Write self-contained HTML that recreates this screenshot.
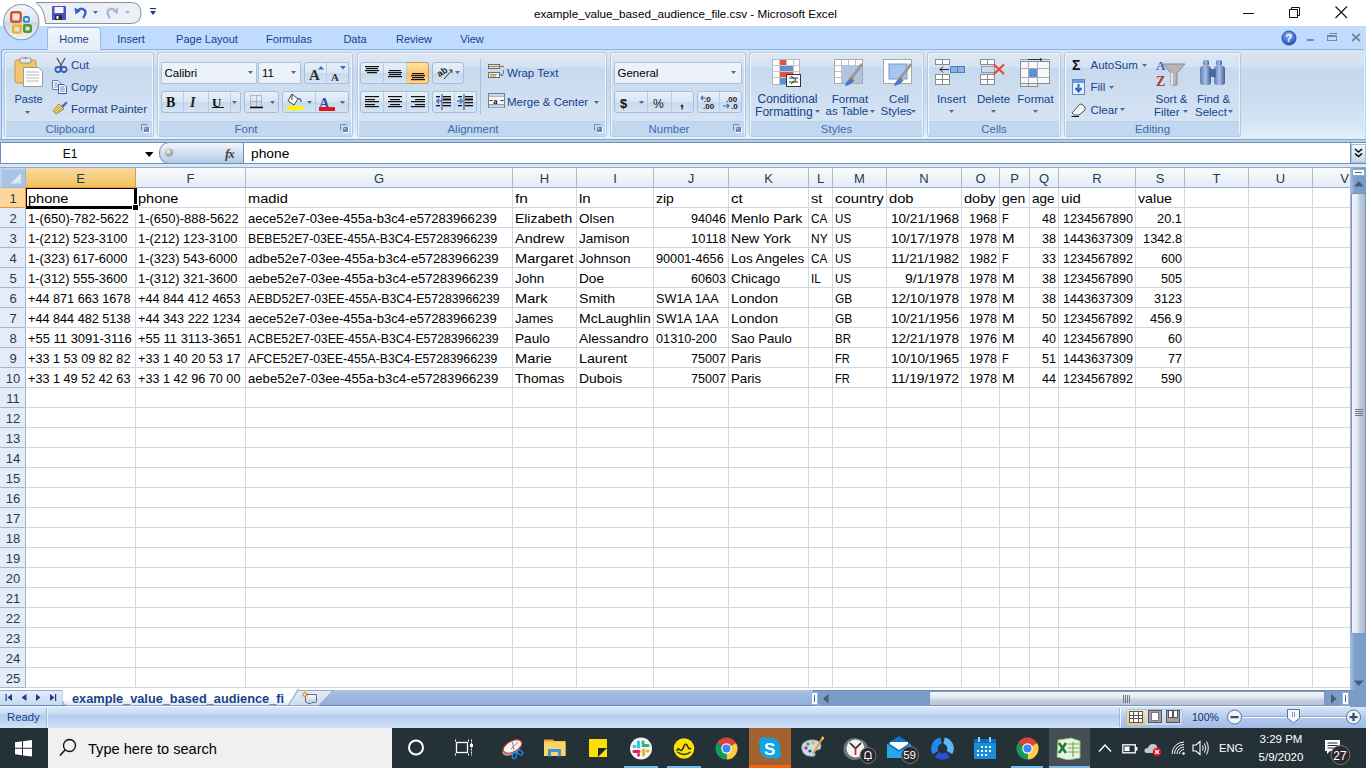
<!DOCTYPE html>
<html><head><meta charset="utf-8"><style>
*{box-sizing:border-box;margin:0;padding:0}
html,body{width:1366px;height:768px;overflow:hidden;background:#fff;font-family:"Liberation Sans",sans-serif;position:relative}
.a{position:absolute}
/* title bar */
#title{left:0;top:0;width:1366px;height:26px;background:#fff}
#ttext{left:0;top:6px;width:1366px;text-align:center;font-size:12.5px;color:#000;letter-spacing:0}
/* ribbon */
#tabs{left:0;top:26px;width:1366px;height:114px;background:#BFDBFF}
#rpanel{left:1px;top:49px;width:1364px;height:90px;border:1px solid #8DB2E3;border-right-color:#CFF3FF;border-bottom-color:#C9F6FF;border-radius:3px 3px 0 0;background:linear-gradient(#DAE5F3 0,#D3E0F1 17px,#C6D8EE 18px,#C9DBEF 45px,#D6E6F5 75px,#E4F2FD 89px)}
.tab{position:absolute;top:30px;height:20px;font-size:12px;color:#15428B;text-align:center}
.tab.on{background:linear-gradient(#F5F9FE,#E1EBF8);border:1px solid #8DB2E3;border-bottom:none;border-radius:3px 3px 0 0;height:21px;top:27px;padding-top:3px}
.grp{position:absolute;top:52px;height:85px;border:1px solid #B6C8DD;border-radius:3px;box-shadow:inset 1px 1px 0 #F0F5FB,inset -1px 0 0 #EEF3FA;background:linear-gradient(#DEE8F5 0,#D4E2F2 14px,#C7D9EE 15px,#D5E4F4 68px)}
.glab{position:absolute;left:1px;right:1px;bottom:0;height:15px;background:#C2D8F0;border-top:1px solid #BDD2EA;text-align:center;font-size:11px;color:#3E6AAA;line-height:15px}
/* formula bar */
#fbar{left:0;top:140px;width:1366px;height:28px;background:#D5E3F4}
/* grid */
#grid{left:0;top:168px;width:1366px;height:520px;background:#fff}
.colhdr{position:absolute;background:linear-gradient(#F8FAFD,#E4EBF6);border-bottom:1px solid #95AECB}
.corner{position:absolute;left:0;top:168px;width:26px;height:20px;background:#A9C4E9;border:1px solid #C4D6EE;border-right:1px solid #9EB6CE;border-bottom:1px solid #9EB6CE;box-shadow:inset 1px 1px 0 #B9CFEC}
.hlh{position:absolute;left:0;width:25px;height:1px}
.ch{position:absolute;top:168px;height:19px;text-align:center;font-size:13px;line-height:21px;color:#1F3B53;background:linear-gradient(#F9FBFD,#E4EBF6)}
.ch.sel{background:linear-gradient(#F9D99F,#F1C15F);border-bottom:1px solid #F29436;height:20px}
.rh{position:absolute;left:0;width:26px;height:19px;background:#E4ECF7;text-align:center;font-size:13px;line-height:22px;padding-left:1px;color:#1F3B53;border-right:1px solid #9EB6CE}
.rh.sel{background:#FCD79C;border-right:1px solid #F29436}
.vl{position:absolute;top:188px;width:1px;height:500px;background:#D0D7E5}
.hl{position:absolute;left:25px;width:1325px;height:1px;background:#D0D7E5}
.c{position:absolute;height:19px;font-size:13px;line-height:20px;color:#000;white-space:nowrap}
.c.r{text-align:right}
.selbox{position:absolute;left:25px;top:187px;width:112px;height:22px;border:2px solid #000}
.fillh{position:absolute;left:133px;top:205px;width:5px;height:5px;background:#000;border:1px solid #fff}
/* bottom */
#tabsbar{left:0;top:688px;width:1366px;height:19px;background:#BFD3EC}
#status{left:0;top:707px;width:1366px;height:21px;background:linear-gradient(#D7E5F6,#C0D6F0)}
#taskbar{left:0;top:728px;width:1366px;height:40px;background:#1F2B33}
.t{position:absolute;line-height:1;white-space:nowrap}
.combo{background:linear-gradient(#EEF3FA,#E9F0F9);border:1px solid #ABC1DE;border-radius:1px}
.btng{background:linear-gradient(#E8EFF9 0,#DAE6F4 48%,#C8DAEE 52%,#D5E3F3 100%);border:1px solid #A6BEDD;border-radius:3px}

</style></head><body>
<div class="a" id="title"></div>
<div class="a" id="tabs"></div>
<div class="a" id="rpanel"></div>
<div class="t" style="top:8.10px;font-size:11.7px;color:#000;left:534px;width:300px;text-align:center;">example_value_based_audience_file.csv - Microsoft Excel</div>
<div class="a " style="left:1243px;top:13px;width:11px;height:1px;background:#111"></div>
<svg class="a" style="left:1289px;top:7px" width="12" height="12"><path d="M0.5 2.5H8.5V10.5H0.5Z M2.5 2.5V0.5H10.5V8.5H8.5" fill="none" stroke="#111"/></svg>
<svg class="a" style="left:1335px;top:6px" width="13" height="13"><path d="M0.5 0.5L12 12M12 0.5L0.5 12" stroke="#111" stroke-width="1.1"/></svg>
<svg class="a" style="left:2px;top:3px" width="40" height="40"><defs><linearGradient id="ob" x1="0" y1="0" x2="0" y2="1"><stop offset="0" stop-color="#F6F8FB"/><stop offset="0.48" stop-color="#DDE3EC"/><stop offset="0.52" stop-color="#C9D3E1"/><stop offset="1" stop-color="#F2F5F9"/></linearGradient></defs>
<circle cx="19.3" cy="19.1" r="17.6" fill="url(#ob)" stroke="#8D9AAE" stroke-width="1.1"/>
<rect x="9.2" y="9.2" width="9.5" height="9.5" rx="2" fill="none" stroke="#E0501A" stroke-width="2.4"/>
<rect x="21.8" y="14" width="5.2" height="4.8" rx="1.2" fill="none" stroke="#2F87D8" stroke-width="1.8"/>
<rect x="11.2" y="22.6" width="7.4" height="7" rx="1.5" fill="none" stroke="#F4B01C" stroke-width="2.4"/>
<rect x="22.2" y="22.2" width="6.6" height="6.5" rx="1.5" fill="none" stroke="#4A9A2C" stroke-width="2.4"/>
<circle cx="18.5" cy="18.1" r="1.1" fill="#E8621E"/><circle cx="22.4" cy="18.1" r="1.1" fill="#2F87D8"/><circle cx="18.5" cy="22.4" r="1.1" fill="#F4B01C"/><circle cx="22.4" cy="22.4" r="1.1" fill="#4A9A2C"/>
</svg>
<svg class="a" style="left:35px;top:1px" width="110" height="24"><path d="M1 1.5H96Q106 1.5 106 12Q106 22.5 96 22.5H10.5Q10 8 1 1.5Z" fill="#EBF0F7" stroke="#8E8E98" stroke-width="1"/></svg>
<svg class="a" style="left:52px;top:6px" width="14" height="14"><rect x="0" y="0" width="14" height="14" rx="1" fill="#4C4FC2"/><rect x="2.5" y="1" width="9" height="6" fill="#F4F4FA"/><rect x="3" y="9" width="7" height="5" fill="#2A2A3A"/><rect x="4.5" y="10" width="2" height="3" fill="#fff"/></svg>
<svg class="a" style="left:74px;top:6px" width="14" height="14"><path d="M3 5Q7 1 10.5 4Q13 7 9 12" stroke="#3565C8" stroke-width="2.4" fill="none"/><path d="M0.5 1.5L1.5 8.5L6.5 5Z" fill="#3565C8"/></svg>
<svg class="a" style="left:93.0px;top:11.0px" width="5" height="3"><path d="M0 0H5L2.5 3Z" fill="#3B6EB2"/></svg>
<svg class="a" style="left:105px;top:6px" width="14" height="14"><path d="M11 5Q7 1 3.5 4Q1 7 5 12" stroke="#A9BBD4" stroke-width="2.4" fill="none"/><path d="M13.5 1.5L12.5 8.5L7.5 5Z" fill="#A9BBD4"/></svg>
<svg class="a" style="left:125.0px;top:11.0px" width="5" height="3"><path d="M0 0H5L2.5 3Z" fill="#A9B4C4"/></svg>
<svg class="a" style="left:150px;top:8px" width="6" height="8"><rect x="0" y="0" width="6" height="1.2" fill="#1E3E78"/><path d="M0 3H6L3 7Z" fill="#1E3E78"/></svg>
<div class="a" style="left:47px;top:27px;width:54px;height:23px;background:linear-gradient(#F2F6FC,#E3ECF8);border:1px solid #9AB9E2;border-bottom:none;border-radius:3px 3px 0 0"></div>
<div class="t" style="top:33.69px;font-size:11px;color:#15428B;left:-76px;width:300px;text-align:center;">Home</div>
<div class="t" style="top:33.69px;font-size:11px;color:#15428B;left:-19px;width:300px;text-align:center;">Insert</div>
<div class="t" style="top:33.69px;font-size:11px;color:#15428B;left:57px;width:300px;text-align:center;">Page Layout</div>
<div class="t" style="top:33.69px;font-size:11px;color:#15428B;left:139px;width:300px;text-align:center;">Formulas</div>
<div class="t" style="top:33.69px;font-size:11px;color:#15428B;left:205px;width:300px;text-align:center;">Data</div>
<div class="t" style="top:33.69px;font-size:11px;color:#15428B;left:264px;width:300px;text-align:center;">Review</div>
<div class="t" style="top:33.69px;font-size:11px;color:#15428B;left:322px;width:300px;text-align:center;">View</div>
<svg class="a" style="left:1281px;top:30px" width="16" height="16"><defs><radialGradient id="hg" cx="0.45" cy="0.3" r="0.7"><stop offset="0" stop-color="#8DB4F5"/><stop offset="1" stop-color="#1F4FC0"/></radialGradient></defs><circle cx="8" cy="8" r="7" fill="url(#hg)" stroke="#2A4C9C"/><text x="4.6" y="12.2" font-size="11" font-weight="bold" font-family="Liberation Sans" fill="#fff">?</text></svg>
<div class="a " style="left:1307px;top:39px;width:7px;height:2px;background:#7C8797"></div>
<svg class="a" style="left:1327px;top:33px" width="11" height="8"><rect x="0.5" y="2.5" width="9" height="5" fill="none" stroke="#7C8797"/><rect x="0.5" y="2.5" width="9" height="1.5" fill="#7C8797"/><path d="M2.5 0.5H10.5" stroke="#7C8797"/></svg>
<svg class="a" style="left:1351px;top:33px" width="10" height="9"><path d="M1 1L9 8M9 1L1 8" stroke="#7C8797" stroke-width="1.8"/></svg>
<div class="grp" style="left:4px;width:150px"><div class="glab"></div></div>
<div class="t" style="top:123.77px;font-size:11.5px;color:#3E6AAA;left:-80.0px;width:300px;text-align:center;">Clipboard</div>
<svg class="a" style="left:141px;top:124px" width="10" height="10"><path d="M0.5 6.5V0.5H6.5" stroke="#6A8CB8" fill="none"/><path d="M8.5 3V8.5H3" stroke="#fff" fill="none"/><rect x="3" y="3" width="5" height="5" fill="#6388B8"/><path d="M3.5 3.5L5.5 5.5" stroke="#DDE8F6" stroke-width="1"/></svg>
<div class="grp" style="left:157px;width:196px"><div class="glab"></div></div>
<div class="t" style="top:123.77px;font-size:11.5px;color:#3E6AAA;left:96.0px;width:300px;text-align:center;">Font</div>
<svg class="a" style="left:340px;top:124px" width="10" height="10"><path d="M0.5 6.5V0.5H6.5" stroke="#6A8CB8" fill="none"/><path d="M8.5 3V8.5H3" stroke="#fff" fill="none"/><rect x="3" y="3" width="5" height="5" fill="#6388B8"/><path d="M3.5 3.5L5.5 5.5" stroke="#DDE8F6" stroke-width="1"/></svg>
<div class="grp" style="left:357px;width:250px"><div class="glab"></div></div>
<div class="t" style="top:123.77px;font-size:11.5px;color:#3E6AAA;left:323.0px;width:300px;text-align:center;">Alignment</div>
<svg class="a" style="left:594px;top:124px" width="10" height="10"><path d="M0.5 6.5V0.5H6.5" stroke="#6A8CB8" fill="none"/><path d="M8.5 3V8.5H3" stroke="#fff" fill="none"/><rect x="3" y="3" width="5" height="5" fill="#6388B8"/><path d="M3.5 3.5L5.5 5.5" stroke="#DDE8F6" stroke-width="1"/></svg>
<div class="grp" style="left:610px;width:136px"><div class="glab"></div></div>
<div class="t" style="top:123.77px;font-size:11.5px;color:#3E6AAA;left:519.0px;width:300px;text-align:center;">Number</div>
<svg class="a" style="left:733px;top:124px" width="10" height="10"><path d="M0.5 6.5V0.5H6.5" stroke="#6A8CB8" fill="none"/><path d="M8.5 3V8.5H3" stroke="#fff" fill="none"/><rect x="3" y="3" width="5" height="5" fill="#6388B8"/><path d="M3.5 3.5L5.5 5.5" stroke="#DDE8F6" stroke-width="1"/></svg>
<div class="grp" style="left:749px;width:175px"><div class="glab"></div></div>
<div class="t" style="top:123.77px;font-size:11.5px;color:#3E6AAA;left:686.5px;width:300px;text-align:center;">Styles</div>
<div class="grp" style="left:927px;width:134px"><div class="glab"></div></div>
<div class="t" style="top:123.77px;font-size:11.5px;color:#3E6AAA;left:844.0px;width:300px;text-align:center;">Cells</div>
<div class="grp" style="left:1064px;width:177px"><div class="glab"></div></div>
<div class="t" style="top:123.77px;font-size:11.5px;color:#3E6AAA;left:1002.5px;width:300px;text-align:center;">Editing</div>
<div class="t" style="top:94.19px;font-size:11px;color:#15428B;left:14.5px;">Paste</div>
<svg class="a" style="left:25.0px;top:110.5px" width="5" height="3"><path d="M0 0H5L2.5 3Z" fill="#4C6C9C"/></svg>
<div class="t" style="top:60.07px;font-size:11.5px;color:#15428B;left:71px;">Cut</div>
<div class="t" style="top:82.07px;font-size:11.5px;color:#15428B;left:71px;">Copy</div>
<div class="t" style="top:103.57px;font-size:11.5px;color:#15428B;left:71px;">Format Painter</div>
<div class="a combo" style="left:161px;top:62px;width:96px;height:22px;"></div>
<div class="a combo" style="left:258px;top:62px;width:43px;height:22px;"></div>
<div class="t" style="top:68.27px;font-size:11.5px;color:#000;left:164.5px;">Calibri</div>
<div class="t" style="top:68.27px;font-size:11.5px;color:#000;left:262px;">11</div>
<svg class="a" style="left:248.0px;top:71.0px" width="5" height="3"><path d="M0 0H5L2.5 3Z" fill="#4C6C9C"/></svg>
<svg class="a" style="left:291.0px;top:71.0px" width="5" height="3"><path d="M0 0H5L2.5 3Z" fill="#4C6C9C"/></svg>
<div class="a btng" style="left:304px;top:62px;width:45px;height:22px;"></div>
<div class="a " style="left:326px;top:63px;width:1px;height:20px;background:#B9CDE6"></div>
<div class="a btng" style="left:161px;top:91px;width:80px;height:22px;"></div>
<div class="a btng" style="left:244px;top:91px;width:35px;height:22px;"></div>
<div class="a btng" style="left:282px;top:91px;width:67px;height:22px;"></div>
<div class="a " style="left:183px;top:92px;width:1px;height:20px;background:#B9CDE6"></div>
<div class="a " style="left:208px;top:92px;width:1px;height:20px;background:#B9CDE6"></div>
<div class="a " style="left:230px;top:92px;width:1px;height:20px;background:#B9CDE6"></div>
<div class="a " style="left:315px;top:92px;width:1px;height:20px;background:#B9CDE6"></div>
<div class="t" style="top:96.15px;font-size:14px;color:#111;font-weight:bold;left:166px;font-family:'Liberation Serif',serif;">B</div>
<div class="t" style="top:96.15px;font-size:14px;color:#222;font-weight:bold;left:190px;font-family:'Liberation Serif',serif;font-style:italic;">I</div>
<div class="t" style="top:96.00px;font-size:13px;color:#111;font-weight:bold;left:212px;font-family:'Liberation Serif',serif;">U</div>
<div class="a " style="left:212px;top:107px;width:12px;height:1px;background:#111"></div>
<svg class="a" style="left:232.0px;top:100.5px" width="5" height="3"><path d="M0 0H5L2.5 3Z" fill="#4C6C9C"/></svg>
<svg class="a" style="left:270.0px;top:100.5px" width="5" height="3"><path d="M0 0H5L2.5 3Z" fill="#4C6C9C"/></svg>
<svg class="a" style="left:307.0px;top:100.5px" width="5" height="3"><path d="M0 0H5L2.5 3Z" fill="#4C6C9C"/></svg>
<svg class="a" style="left:340.0px;top:100.5px" width="5" height="3"><path d="M0 0H5L2.5 3Z" fill="#4C6C9C"/></svg>
<div class="t" style="top:68.30px;font-size:15px;color:#333;font-weight:bold;left:309px;font-family:'Liberation Serif',serif;">A</div>
<div class="t" style="top:71.69px;font-size:11px;color:#333;font-weight:bold;left:331px;font-family:'Liberation Serif',serif;">A</div>
<svg class="a" style="left:318px;top:66px" width="6" height="4"><path d="M0 3.5L3 0L6 3.5Z" fill="#3B6EB2"/></svg>
<svg class="a" style="left:340px;top:66px" width="6" height="4"><path d="M0 0L3 3.5L6 0Z" fill="#3B6EB2"/></svg>
<svg class="a" style="left:249px;top:94px" width="15" height="15"><g stroke="#8A8A8A" stroke-width="1" stroke-dasharray="1 1" fill="none"><rect x="1.5" y="1.5" width="11" height="11"/><path d="M7.5 1.5V12.5M1.5 7.5H12.5"/></g><path d="M1 13.5H14" stroke="#111" stroke-width="1.5"/></svg>
<svg class="a" style="left:286px;top:93px" width="18" height="17"><path d="M6 1L2 8L8 12L12 6Z" fill="#fff" stroke="#444" stroke-width="1"/><path d="M12 6Q15 5 15 9" stroke="#3B6EB2" stroke-width="1.5" fill="none"/><path d="M6 1V7" stroke="#444"/><rect x="1" y="13" width="16" height="4" fill="#FFF200"/></svg>
<div class="t" style="top:95.73px;font-size:14.5px;color:#2D4E9E;font-weight:bold;left:319px;font-family:'Liberation Serif',serif;">A</div>
<div class="a " style="left:319px;top:107px;width:16px;height:4px;background:#E8141B"></div>
<div class="a btng" style="left:360px;top:62px;width:69px;height:22px;"></div>
<div class="a " style="left:406px;top:62px;width:23px;height:22px;background:linear-gradient(#FFE7A2,#FFC163 60%,#FFD98C);border:1px solid #C29B5C;border-radius:0 3px 3px 0"></div>
<div class="a btng" style="left:432px;top:62px;width:32px;height:22px;"></div>
<div class="a btng" style="left:360px;top:91px;width:69px;height:22px;"></div>
<div class="a btng" style="left:432px;top:91px;width:45px;height:22px;"></div>
<div class="a " style="left:383px;top:63px;width:1px;height:20px;background:#B9CDE6"></div>
<div class="a " style="left:406px;top:63px;width:1px;height:20px;background:#B9CDE6"></div>
<div class="a " style="left:383px;top:92px;width:1px;height:20px;background:#B9CDE6"></div>
<div class="a " style="left:406px;top:92px;width:1px;height:20px;background:#B9CDE6"></div>
<div class="a " style="left:454px;top:92px;width:1px;height:20px;background:#B9CDE6"></div>
<div class="a " style="left:480px;top:59px;width:1px;height:55px;background:#A8BFDD"></div>
<svg class="a" style="left:365px;top:66px" width="16" height="14"><rect x="0" y="0" width="14" height="1.2" fill="#111"/><rect x="1" y="2" width="12" height="1.2" fill="#111"/><rect x="0" y="4" width="14" height="1.2" fill="#111"/><rect x="2" y="6" width="10" height="1.2" fill="#111"/></svg>
<svg class="a" style="left:388px;top:70px" width="16" height="14"><rect x="1" y="0" width="12" height="1.2" fill="#111"/><rect x="0" y="2" width="14" height="1.2" fill="#111"/><rect x="1" y="4" width="12" height="1.2" fill="#111"/><rect x="0" y="6" width="14" height="1.2" fill="#111"/></svg>
<svg class="a" style="left:411px;top:73px" width="16" height="14"><rect x="1" y="0" width="12" height="1.2" fill="#111"/><rect x="0" y="2" width="14" height="1.2" fill="#111"/><rect x="1" y="4" width="12" height="1.2" fill="#111"/><rect x="0" y="6" width="14" height="1.2" fill="#111"/></svg>
<svg class="a" style="left:365px;top:96px" width="16" height="14"><rect x="0" y="0" width="14" height="1.2" fill="#111"/><rect x="0" y="3" width="10" height="1.2" fill="#111"/><rect x="0" y="5" width="14" height="1.2" fill="#111"/><rect x="0" y="8" width="10" height="1.2" fill="#111"/><rect x="0" y="10" width="14" height="1.2" fill="#111"/></svg>
<svg class="a" style="left:388px;top:96px" width="16" height="14"><rect x="0" y="0" width="14" height="1.2" fill="#111"/><rect x="2" y="3" width="10" height="1.2" fill="#111"/><rect x="0" y="5" width="14" height="1.2" fill="#111"/><rect x="2" y="8" width="10" height="1.2" fill="#111"/><rect x="0" y="10" width="14" height="1.2" fill="#111"/></svg>
<svg class="a" style="left:411px;top:96px" width="16" height="14"><rect x="0" y="0" width="14" height="1.2" fill="#111"/><rect x="4" y="3" width="10" height="1.2" fill="#111"/><rect x="0" y="5" width="14" height="1.2" fill="#111"/><rect x="4" y="8" width="10" height="1.2" fill="#111"/><rect x="0" y="10" width="14" height="1.2" fill="#111"/></svg>
<svg class="a" style="left:436px;top:64px" width="20" height="17"><text x="1" y="11" font-size="9" font-family="Liberation Sans" font-weight="bold" fill="#222" transform="rotate(-35 6 8)">ab</text><path d="M8 15L16 6M13 6H16V9" stroke="#333" fill="none"/></svg>
<svg class="a" style="left:455.0px;top:71.0px" width="5" height="3"><path d="M0 0H5L2.5 3Z" fill="#4C6C9C"/></svg>
<svg class="a" style="left:436px;top:94px" width="40" height="16"><g fill="#111"><rect x="5.5" y="0" width="1" height="16" opacity="0.8"/><rect x="7" y="2" width="8" height="1.3"/><rect x="7" y="4.5" width="8" height="2"/><rect x="7" y="8" width="8" height="1.3"/><rect x="7" y="11" width="8" height="1.3"/><rect x="0" y="11" width="4" height="1.3"/><rect x="0" y="2" width="4" height="1.3"/><rect x="27.5" y="0" width="1" height="16" opacity="0.8"/><rect x="29" y="2" width="8" height="1.3"/><rect x="29" y="4.5" width="8" height="2"/><rect x="29" y="8" width="8" height="1.3"/><rect x="29" y="11" width="8" height="1.3"/><rect x="22" y="11" width="4" height="1.3"/><rect x="22" y="2" width="4" height="1.3"/></g><path d="M0.5 7H6M0.5 7L3 4.5M0.5 7L3 9.5" stroke="#3B78D8" stroke-width="1.4" fill="none"/><path d="M21 7H26.5M26.5 7L24 4.5M26.5 7L24 9.5" stroke="#3B78D8" stroke-width="1.4" fill="none"/></svg>
<svg class="a" style="left:488px;top:64px" width="17" height="15"><rect x="0.5" y="0.5" width="11" height="4" fill="#F4F4F4" stroke="#6B6B6B"/><rect x="0.5" y="8.5" width="11" height="5" fill="#F4F4F4" stroke="#6B6B6B"/><path d="M1 2.5H16" stroke="#B8772E" stroke-width="1.2"/><path d="M2 10.5H9M2 12H8" stroke="#B8772E" stroke-width="0.9"/><path d="M15.5 6V9.5L13 11.5M13 9.5V11.5H15" stroke="#5B7FB8" fill="none"/></svg>
<div class="t" style="top:68.27px;font-size:11.5px;color:#15428B;left:507px;">Wrap Text</div>
<svg class="a" style="left:488px;top:93px" width="17" height="15"><rect x="0.5" y="0.5" width="16" height="14" fill="#F6F6F6" stroke="#6F7F96"/><path d="M0.5 3.5H16.5M0.5 11.5H16.5M8.5 0.5V3.5M8.5 11.5V14.5" stroke="#8A9AB0"/><rect x="1" y="1" width="15" height="2.5" fill="#C9D6E8"/><rect x="1" y="12" width="15" height="2.5" fill="#C9D6E8"/><text x="5.2" y="10.5" font-size="8.5" font-family="Liberation Serif" font-weight="bold" fill="#111">a</text><path d="M1.5 7.5H4.5M12.5 7.5H15.5" stroke="#333"/></svg>
<div class="t" style="top:97.27px;font-size:11.5px;color:#15428B;left:507px;">Merge &amp; Center</div>
<svg class="a" style="left:594.0px;top:100.5px" width="5" height="3"><path d="M0 0H5L2.5 3Z" fill="#4C6C9C"/></svg>
<div class="a combo" style="left:614px;top:62px;width:128px;height:22px;"></div>
<div class="t" style="top:68.27px;font-size:11.5px;color:#000;left:617.5px;">General</div>
<svg class="a" style="left:731.0px;top:71.0px" width="5" height="3"><path d="M0 0H5L2.5 3Z" fill="#4C6C9C"/></svg>
<div class="a btng" style="left:614px;top:91px;width:80px;height:22px;"></div>
<div class="a btng" style="left:697px;top:91px;width:45px;height:22px;"></div>
<div class="a " style="left:647px;top:92px;width:1px;height:20px;background:#B9CDE6"></div>
<div class="a " style="left:671px;top:92px;width:1px;height:20px;background:#B9CDE6"></div>
<div class="a " style="left:719px;top:92px;width:1px;height:20px;background:#B9CDE6"></div>
<div class="t" style="top:97.00px;font-size:13px;color:#111;font-weight:bold;left:620px;">$</div>
<svg class="a" style="left:639.0px;top:100.5px" width="5" height="3"><path d="M0 0H5L2.5 3Z" fill="#4C6C9C"/></svg>
<div class="t" style="top:97.84px;font-size:12px;color:#111;left:653px;">%</div>
<div class="t" style="top:95.15px;font-size:14px;color:#111;font-weight:bold;left:680px;">,</div>
<svg class="a" style="left:700px;top:94px" width="40" height="16"><text x="4" y="7.5" font-size="8" font-family="Liberation Sans" font-weight="bold" fill="#222">.0</text><text x="3" y="15" font-size="8" font-family="Liberation Sans" font-weight="bold" fill="#222">.00</text><path d="M1 4H6M1 4L3 2M1 4L3 6" stroke="#3B6EB2" stroke-width="1.2" fill="none"/><text x="26" y="7.5" font-size="8" font-family="Liberation Sans" font-weight="bold" fill="#222">.00</text><text x="31" y="15" font-size="8" font-family="Liberation Sans" font-weight="bold" fill="#222">.0</text><path d="M23 12H29M29 12L27 10M29 12L27 14" stroke="#3B6EB2" stroke-width="1.2" fill="none"/></svg>
<div class="t" style="top:93.24px;font-size:12px;color:#15428B;left:637.5px;width:300px;text-align:center;">Conditional</div>
<div class="t" style="top:105.96px;font-size:12.1px;color:#15428B;left:755px;">Formatting</div>
<svg class="a" style="left:815.0px;top:109.5px" width="5" height="3"><path d="M0 0H5L2.5 3Z" fill="#4C6C9C"/></svg>
<div class="t" style="top:93.67px;font-size:11.5px;color:#15428B;left:700px;width:300px;text-align:center;">Format</div>
<div class="t" style="top:106.47px;font-size:11.5px;color:#15428B;left:825.5px;">as Table</div>
<svg class="a" style="left:869.5px;top:109.5px" width="5" height="3"><path d="M0 0H5L2.5 3Z" fill="#4C6C9C"/></svg>
<div class="t" style="top:93.67px;font-size:11.5px;color:#15428B;left:749px;width:300px;text-align:center;">Cell</div>
<div class="t" style="top:106.47px;font-size:11.5px;color:#15428B;left:880.5px;">Styles</div>
<svg class="a" style="left:910.5px;top:109.5px" width="5" height="3"><path d="M0 0H5L2.5 3Z" fill="#4C6C9C"/></svg>
<svg class="a" style="left:772px;top:59px" width="30" height="28"><g fill="#fff" stroke="#B5B5B5" stroke-width="1"><rect x="0.5" y="0.5" width="27" height="25"/></g><path d="M7.5 0.5V25.5M14.5 0.5V25.5M21.5 0.5V25.5M0.5 6.5H27.5M0.5 12.5H27.5M0.5 18.5H27.5" stroke="#C8C8C8"/><rect x="8" y="1" width="6" height="5" fill="#E8503A"/><rect x="8" y="7" width="13" height="5" fill="#5B8FD8"/><rect x="8" y="13" width="13" height="5" fill="#E8503A"/><rect x="8" y="19" width="6" height="6" fill="#5B8FD8"/><rect x="14.5" y="15.5" width="14" height="12" fill="#fff" stroke="#333"/><path d="M17 19H26M17 23H26M19 17L24 21L19 25" stroke="#333" fill="none" stroke-width="1"/></svg>
<svg class="a" style="left:834px;top:59px" width="30" height="28"><rect x="0.5" y="0.5" width="28" height="24" fill="#fff" stroke="#A8A8A8"/><rect x="7" y="6" width="21" height="18" fill="#A9C4EE"/><path d="M7.5 0.5V24.5M14.5 0.5V24.5M21.5 0.5V24.5M0.5 6.5H28.5M0.5 12.5H28.5M0.5 18.5H28.5" stroke="#C0C0C0"/><path d="M28 5L16 21" stroke="#9A9A9A" stroke-width="3"/><path d="M17 19Q12 22 11 27Q17 26 20 22Z" fill="#4A78C8"/><path d="M16 19L20 22" stroke="#9B7A42" stroke-width="2"/></svg>
<svg class="a" style="left:883px;top:59px" width="30" height="28"><rect x="0.5" y="0.5" width="28" height="24" fill="#fff" stroke="#A8A8A8"/><rect x="6" y="5" width="18" height="15" fill="#A9C4EE" stroke="#6E9AD8"/><path d="M28 5L16 21" stroke="#9A9A9A" stroke-width="3"/><path d="M17 19Q12 22 11 27Q17 26 20 22Z" fill="#4A78C8"/><path d="M16 19L20 22" stroke="#9B7A42" stroke-width="2"/></svg>
<div class="t" style="top:93.97px;font-size:11.5px;color:#15428B;left:801.5px;width:300px;text-align:center;">Insert</div>
<svg class="a" style="left:949.0px;top:110.0px" width="5" height="3"><path d="M0 0H5L2.5 3Z" fill="#4C6C9C"/></svg>
<div class="t" style="top:93.97px;font-size:11.5px;color:#15428B;left:843.5px;width:300px;text-align:center;">Delete</div>
<svg class="a" style="left:991.0px;top:110.0px" width="5" height="3"><path d="M0 0H5L2.5 3Z" fill="#4C6C9C"/></svg>
<div class="t" style="top:93.97px;font-size:11.5px;color:#15428B;left:885.5px;width:300px;text-align:center;">Format</div>
<svg class="a" style="left:1033.0px;top:110.0px" width="5" height="3"><path d="M0 0H5L2.5 3Z" fill="#4C6C9C"/></svg>
<svg class="a" style="left:935px;top:58px" width="33" height="28"><rect x="0.5" y="1.5" width="7" height="5" fill="#fff" stroke="#8C8C8C"/><rect x="7.5" y="1.5" width="7" height="5" fill="#fff" stroke="#8C8C8C"/><rect x="0.5" y="16.5" width="7" height="5" fill="#fff" stroke="#8C8C8C"/><rect x="7.5" y="16.5" width="7" height="5" fill="#fff" stroke="#8C8C8C"/><rect x="0.5" y="21.5" width="7" height="5" fill="#fff" stroke="#8C8C8C"/><rect x="7.5" y="21.5" width="7" height="5" fill="#fff" stroke="#8C8C8C"/><rect x="15.5" y="8.5" width="7" height="6" fill="#8CB0E8" stroke="#4E7BC0"/><rect x="22.5" y="8.5" width="7" height="6" fill="#8CB0E8" stroke="#4E7BC0"/><path d="M5 11.5H14M5 11.5L8 8.5M5 11.5L8 14.5" stroke="#222" fill="none"/></svg>
<svg class="a" style="left:980px;top:58px" width="27" height="28"><rect x="0.5" y="1.5" width="7" height="5" fill="#fff" stroke="#8C8C8C"/><rect x="7.5" y="1.5" width="7" height="5" fill="#fff" stroke="#8C8C8C"/><rect x="0.5" y="16.5" width="7" height="5" fill="#fff" stroke="#8C8C8C"/><rect x="7.5" y="16.5" width="7" height="5" fill="#fff" stroke="#8C8C8C"/><rect x="0.5" y="21.5" width="7" height="5" fill="#fff" stroke="#8C8C8C"/><rect x="7.5" y="21.5" width="7" height="5" fill="#fff" stroke="#8C8C8C"/><rect x="1.5" y="8.5" width="13" height="6" fill="none" stroke="#555" stroke-dasharray="1 1"/><path d="M14 6.5L24 16M24 6.5L14 16" stroke="#E8472B" stroke-width="2"/></svg>
<svg class="a" style="left:1020px;top:58px" width="31" height="29"><path d="M0.5 1.5H29.5" stroke="#555" stroke-dasharray="1 1"/><path d="M8 1.5H22M19.5 -0.5L22 1.5L19.5 3.5" stroke="#333" fill="none"/><rect x="0.5" y="3.5" width="29" height="22" fill="#F7F8FB" stroke="#8C8C8C"/><path d="M8.5 3.5V25.5M17.5 3.5V25.5M0.5 10.5H29.5M0.5 19.5H29.5" stroke="#B0B0B0"/><rect x="9" y="11" width="8" height="8" fill="#5D8FE0"/><rect x="0.5" y="25.5" width="8" height="3" fill="#E8ECF2" stroke="#8C8C8C"/><rect x="8.5" y="25.5" width="9" height="3" fill="#E8ECF2" stroke="#8C8C8C"/></svg>
<div class="t" style="top:58.15px;font-size:14px;color:#111;font-weight:bold;left:1072px;">Σ</div>
<div class="t" style="top:60.07px;font-size:11.5px;color:#15428B;left:1090.5px;">AutoSum</div>
<svg class="a" style="left:1142.0px;top:63.5px" width="5" height="3"><path d="M0 0H5L2.5 3Z" fill="#4C6C9C"/></svg>
<svg class="a" style="left:1072px;top:79px" width="14" height="17"><rect x="0.5" y="0.5" width="12" height="15" fill="#E9F0FA" stroke="#5C86C4"/><rect x="1" y="1" width="11" height="3" fill="#6D9AE0"/><path d="M6.5 5V11M3.5 9L6.5 12.5L9.5 9" stroke="#2E65C8" stroke-width="2" fill="none"/></svg>
<div class="t" style="top:82.27px;font-size:11.5px;color:#15428B;left:1090.5px;">Fill</div>
<svg class="a" style="left:1108.5px;top:86.0px" width="5" height="3"><path d="M0 0H5L2.5 3Z" fill="#4C6C9C"/></svg>
<svg class="a" style="left:1071px;top:103px" width="16" height="14"><path d="M1 10L8 2Q10 0 12 2L14 4Q15 6 13 8L8 12H3Z" fill="#F4F4F4" stroke="#555"/><path d="M0.5 13.5H8" stroke="#111"/></svg>
<div class="t" style="top:104.57px;font-size:11.5px;color:#15428B;left:1090.5px;">Clear</div>
<svg class="a" style="left:1120.0px;top:108.0px" width="5" height="3"><path d="M0 0H5L2.5 3Z" fill="#4C6C9C"/></svg>
<svg class="a" style="left:1156px;top:58px" width="32" height="30"><text x="0" y="12" font-size="13" font-family="Liberation Serif" font-weight="bold" fill="#3D62B8">A</text><text x="0" y="28" font-size="14" font-family="Liberation Serif" font-weight="bold" fill="#B03A2E">Z</text><path d="M7 6H29L21 15V27H15V15Z" fill="#B6B6B6" stroke="#8A8A8A"/><path d="M16 15V27" stroke="#E6E6E6" stroke-width="2"/></svg>
<div class="t" style="top:93.97px;font-size:11.5px;color:#15428B;left:1021.5px;width:300px;text-align:center;">Sort &amp;</div>
<div class="t" style="top:106.97px;font-size:11.5px;color:#15428B;left:1154px;">Filter</div>
<svg class="a" style="left:1183.0px;top:109.5px" width="5" height="3"><path d="M0 0H5L2.5 3Z" fill="#4C6C9C"/></svg>
<svg class="a" style="left:1199px;top:59px" width="28" height="26"><defs><linearGradient id="bn" x1="0" x2="1"><stop offset="0" stop-color="#5B7DB8"/><stop offset="0.5" stop-color="#A9C0E6"/><stop offset="1" stop-color="#3F5E96"/></linearGradient></defs><rect x="4" y="1" width="6" height="6" rx="2" fill="url(#bn)"/><rect x="17" y="1" width="6" height="6" rx="2" fill="url(#bn)"/><rect x="1" y="7" width="11" height="19" rx="3" fill="url(#bn)"/><rect x="15" y="7" width="11" height="19" rx="3" fill="url(#bn)"/><rect x="10" y="10" width="7" height="8" fill="#4A6AA4"/></svg>
<div class="t" style="top:93.97px;font-size:11.5px;color:#15428B;left:1063.5px;width:300px;text-align:center;">Find &amp;</div>
<div class="t" style="top:106.97px;font-size:11.5px;color:#15428B;left:1195px;">Select</div>
<svg class="a" style="left:1228.0px;top:109.5px" width="5" height="3"><path d="M0 0H5L2.5 3Z" fill="#4C6C9C"/></svg>
<svg class="a" style="left:14px;top:57px" width="30" height="32"><rect x="1" y="3" width="21" height="23" rx="2" fill="#F2C46C" stroke="#C79A45"/><rect x="6" y="1" width="11" height="5" rx="1" fill="#E8E8E8" stroke="#8E8E8E"/><path d="M11.5 0V2" stroke="#777"/><path d="M9.5 10.5H24.5L28.5 14.5V29.5H9.5Z" fill="#fff" stroke="#9C9C9C"/><path d="M12 15H25M12 18H25M12 21H25M12 24H25" stroke="#B8B8B8"/></svg>
<svg class="a" style="left:54px;top:57px" width="14" height="16"><path d="M3 1L8 10M11 1L6 10" stroke="#555" stroke-width="1.3"/><circle cx="4" cy="12.5" r="2.6" fill="none" stroke="#2D5DB8" stroke-width="1.6"/><circle cx="10" cy="12.5" r="2.6" fill="none" stroke="#2D5DB8" stroke-width="1.6"/></svg>
<svg class="a" style="left:52px;top:80px" width="16" height="14"><path d="M0.5 0.5H6L8.5 3V9.5H0.5Z" fill="#fff" stroke="#5B7FB8"/><path d="M2 3H6M2 5H7M2 7H7" stroke="#7A9BD0"/><path d="M6.5 4.5H12L14.5 7V13.5H6.5Z" fill="#fff" stroke="#2E5DB0"/><path d="M8 7H12M8 9H13M8 11H13" stroke="#5B86D0"/></svg>
<svg class="a" style="left:52px;top:101px" width="16" height="14"><path d="M9 5L14 0.5L15.5 2L11 7Z" fill="#5B5FC0"/><path d="M1 10L7 3L12 8L4 13Z" fill="#E6D27A" stroke="#A58C3C"/><path d="M3 11L8 6M5 12L10 7" stroke="#B89B42"/></svg>
<div class="a " style="left:0px;top:139px;width:1366px;height:29px;background:#BACDE6"></div>
<div class="a " style="left:0px;top:139px;width:1366px;height:1px;background:#8FA6C2"></div>
<div class="a " style="left:0px;top:142px;width:1366px;height:22px;background:#fff;border-top:1px solid #6B8EB8;border-bottom:1px solid #6B8EB8"></div>
<div class="a " style="left:0px;top:164px;width:1366px;height:3px;background:#DCE7F5"></div>
<div class="a " style="left:0px;top:167px;width:1366px;height:1px;background:#8FAACB"></div>
<div class="a " style="left:0px;top:142px;width:1px;height:22px;background:#7090B7"></div>
<div class="t" style="top:147.84px;font-size:12px;color:#000;left:-80px;width:300px;text-align:center;">E1</div>
<svg class="a" style="left:145px;top:152px" width="9" height="5"><path d="M0 0H8.5L4.25 5Z" fill="#000"/></svg>
<svg class="a" style="left:158px;top:142px" width="87" height="22"><defs><linearGradient id="fx" x1="0" y1="0" x2="0" y2="1"><stop offset="0" stop-color="#F4F7FC"/><stop offset="1" stop-color="#B2C8E7"/></linearGradient><radialGradient id="fxb" cx="0.4" cy="0.35" r="0.6"><stop offset="0" stop-color="#F2F2F2"/><stop offset="1" stop-color="#9A9A9A"/></radialGradient></defs><path d="M86 0.5H12Q1.5 0.5 1.5 11Q1.5 21.5 12 21.5H86" fill="url(#fx)" stroke="#7090B7"/><rect x="85" y="0" width="1" height="22" fill="#7090B7"/><circle cx="11" cy="10.5" r="4" fill="url(#fxb)"/></svg>
<div class="t" style="top:147.00px;font-size:13px;color:#444;font-weight:bold;left:225px;font-family:'Liberation Serif',serif;font-style:italic;letter-spacing:-1px">fx</div>
<div class="t" style="top:147.00px;font-size:13px;color:#000;left:251px;transform:scaleX(1.06);transform-origin:left">phone</div>
<div class="a " style="left:1350px;top:143px;width:16px;height:20px;background:#fff"></div>
<div class="a " style="left:1350px;top:143px;width:1px;height:20px;background:#6B8EB8"></div>
<div class="a " style="left:1351px;top:144px;width:15px;height:19px;background:linear-gradient(#F6F8FC,#C3D4EC);border:1px solid #A9BDD8"></div>
<svg class="a" style="left:1354px;top:148px" width="9" height="10"><path d="M1 1L4.5 4L8 1M1 5.5L4.5 8.5L8 5.5" stroke="#000" stroke-width="1.5" fill="none"/></svg>
<div class="a" id="grid"></div>
<div class="colhdr" style="left:0;top:168px;width:1350px;height:20px"></div>
<div class="corner"></div>
<svg class="a" style="left:9px;top:172px" width="14" height="13"><defs><linearGradient id="tri" x1="0" y1="0" x2="1" y2="1"><stop offset="0" stop-color="#F7F9FC"/><stop offset="1" stop-color="#D6DDE8"/></linearGradient></defs><path d="M1.5 11.5L12 1.5V11.5Z" fill="url(#tri)"/></svg>
<div class="ch sel" style="left:26px;width:109px">E</div>
<div class="ch" style="left:136px;width:109px">F</div>
<div class="ch" style="left:246px;width:266px">G</div>
<div class="ch" style="left:513px;width:63px">H</div>
<div class="ch" style="left:577px;width:76px">I</div>
<div class="ch" style="left:654px;width:74px">J</div>
<div class="ch" style="left:729px;width:79px">K</div>
<div class="ch" style="left:809px;width:23px">L</div>
<div class="ch" style="left:833px;width:53px">M</div>
<div class="ch" style="left:887px;width:74px">N</div>
<div class="ch" style="left:962px;width:37px">O</div>
<div class="ch" style="left:1000px;width:29px">P</div>
<div class="ch" style="left:1030px;width:28px">Q</div>
<div class="ch" style="left:1059px;width:76px">R</div>
<div class="ch" style="left:1136px;width:48px">S</div>
<div class="ch" style="left:1185px;width:63px">T</div>
<div class="ch" style="left:1249px;width:63px">U</div>
<div class="ch" style="left:1313px;width:63px">V</div>
<div class="rh sel" style="top:188px">1</div>
<div class="rh" style="top:208px">2</div>
<div class="rh" style="top:228px">3</div>
<div class="rh" style="top:248px">4</div>
<div class="rh" style="top:268px">5</div>
<div class="rh" style="top:288px">6</div>
<div class="rh" style="top:308px">7</div>
<div class="rh" style="top:328px">8</div>
<div class="rh" style="top:348px">9</div>
<div class="rh" style="top:368px">10</div>
<div class="rh" style="top:388px">11</div>
<div class="rh" style="top:408px">12</div>
<div class="rh" style="top:428px">13</div>
<div class="rh" style="top:448px">14</div>
<div class="rh" style="top:468px">15</div>
<div class="rh" style="top:488px">16</div>
<div class="rh" style="top:508px">17</div>
<div class="rh" style="top:528px">18</div>
<div class="rh" style="top:548px">19</div>
<div class="rh" style="top:568px">20</div>
<div class="rh" style="top:588px">21</div>
<div class="rh" style="top:608px">22</div>
<div class="rh" style="top:628px">23</div>
<div class="rh" style="top:648px">24</div>
<div class="rh" style="top:668px">25</div>
<div class="vl" style="left:135px"></div>
<div class="a" style="left:135px;top:168px;width:1px;height:19px;background:#F29436"></div>
<div class="vl" style="left:245px"></div>
<div class="a" style="left:245px;top:168px;width:1px;height:19px;background:#A5BAD4"></div>
<div class="vl" style="left:512px"></div>
<div class="a" style="left:512px;top:168px;width:1px;height:19px;background:#A5BAD4"></div>
<div class="vl" style="left:576px"></div>
<div class="a" style="left:576px;top:168px;width:1px;height:19px;background:#A5BAD4"></div>
<div class="vl" style="left:653px"></div>
<div class="a" style="left:653px;top:168px;width:1px;height:19px;background:#A5BAD4"></div>
<div class="vl" style="left:728px"></div>
<div class="a" style="left:728px;top:168px;width:1px;height:19px;background:#A5BAD4"></div>
<div class="vl" style="left:808px"></div>
<div class="a" style="left:808px;top:168px;width:1px;height:19px;background:#A5BAD4"></div>
<div class="vl" style="left:832px"></div>
<div class="a" style="left:832px;top:168px;width:1px;height:19px;background:#A5BAD4"></div>
<div class="vl" style="left:886px"></div>
<div class="a" style="left:886px;top:168px;width:1px;height:19px;background:#A5BAD4"></div>
<div class="vl" style="left:961px"></div>
<div class="a" style="left:961px;top:168px;width:1px;height:19px;background:#A5BAD4"></div>
<div class="vl" style="left:999px"></div>
<div class="a" style="left:999px;top:168px;width:1px;height:19px;background:#A5BAD4"></div>
<div class="vl" style="left:1029px"></div>
<div class="a" style="left:1029px;top:168px;width:1px;height:19px;background:#A5BAD4"></div>
<div class="vl" style="left:1058px"></div>
<div class="a" style="left:1058px;top:168px;width:1px;height:19px;background:#A5BAD4"></div>
<div class="vl" style="left:1135px"></div>
<div class="a" style="left:1135px;top:168px;width:1px;height:19px;background:#A5BAD4"></div>
<div class="vl" style="left:1184px"></div>
<div class="a" style="left:1184px;top:168px;width:1px;height:19px;background:#A5BAD4"></div>
<div class="vl" style="left:1248px"></div>
<div class="a" style="left:1248px;top:168px;width:1px;height:19px;background:#A5BAD4"></div>
<div class="vl" style="left:1312px"></div>
<div class="a" style="left:1312px;top:168px;width:1px;height:19px;background:#A5BAD4"></div>
<div class="hl" style="top:207px"></div>
<div class="hlh" style="top:207px;background:#F29436"></div>
<div class="hl" style="top:227px"></div>
<div class="hlh" style="top:227px;background:#9EB6CE"></div>
<div class="hl" style="top:247px"></div>
<div class="hlh" style="top:247px;background:#9EB6CE"></div>
<div class="hl" style="top:267px"></div>
<div class="hlh" style="top:267px;background:#9EB6CE"></div>
<div class="hl" style="top:287px"></div>
<div class="hlh" style="top:287px;background:#9EB6CE"></div>
<div class="hl" style="top:307px"></div>
<div class="hlh" style="top:307px;background:#9EB6CE"></div>
<div class="hl" style="top:327px"></div>
<div class="hlh" style="top:327px;background:#9EB6CE"></div>
<div class="hl" style="top:347px"></div>
<div class="hlh" style="top:347px;background:#9EB6CE"></div>
<div class="hl" style="top:367px"></div>
<div class="hlh" style="top:367px;background:#9EB6CE"></div>
<div class="hl" style="top:387px"></div>
<div class="hlh" style="top:387px;background:#9EB6CE"></div>
<div class="hl" style="top:407px"></div>
<div class="hlh" style="top:407px;background:#9EB6CE"></div>
<div class="hl" style="top:427px"></div>
<div class="hlh" style="top:427px;background:#9EB6CE"></div>
<div class="hl" style="top:447px"></div>
<div class="hlh" style="top:447px;background:#9EB6CE"></div>
<div class="hl" style="top:467px"></div>
<div class="hlh" style="top:467px;background:#9EB6CE"></div>
<div class="hl" style="top:487px"></div>
<div class="hlh" style="top:487px;background:#9EB6CE"></div>
<div class="hl" style="top:507px"></div>
<div class="hlh" style="top:507px;background:#9EB6CE"></div>
<div class="hl" style="top:527px"></div>
<div class="hlh" style="top:527px;background:#9EB6CE"></div>
<div class="hl" style="top:547px"></div>
<div class="hlh" style="top:547px;background:#9EB6CE"></div>
<div class="hl" style="top:567px"></div>
<div class="hlh" style="top:567px;background:#9EB6CE"></div>
<div class="hl" style="top:587px"></div>
<div class="hlh" style="top:587px;background:#9EB6CE"></div>
<div class="hl" style="top:607px"></div>
<div class="hlh" style="top:607px;background:#9EB6CE"></div>
<div class="hl" style="top:627px"></div>
<div class="hlh" style="top:627px;background:#9EB6CE"></div>
<div class="hl" style="top:647px"></div>
<div class="hlh" style="top:647px;background:#9EB6CE"></div>
<div class="hl" style="top:667px"></div>
<div class="hlh" style="top:667px;background:#9EB6CE"></div>
<div class="hl" style="top:687px"></div>
<div class="hlh" style="top:687px;background:#9EB6CE"></div>
<div class="c" style="top:189px;left:28px;transform:scaleX(1.119);transform-origin:left">phone</div>
<div class="c" style="top:189px;left:138px;transform:scaleX(1.119);transform-origin:left">phone</div>
<div class="c" style="top:189px;left:248px;transform:scaleX(1.124);transform-origin:left">madid</div>
<div class="c" style="top:189px;left:515px;transform:scaleX(1.191);transform-origin:left">fn</div>
<div class="c" style="top:189px;left:579px;transform:scaleX(1.160);transform-origin:left">ln</div>
<div class="c" style="top:189px;left:656px;transform:scaleX(1.076);transform-origin:left">zip</div>
<div class="c" style="top:189px;left:731px;transform:scaleX(1.165);transform-origin:left">ct</div>
<div class="c" style="top:189px;left:811px;transform:scaleX(1.116);transform-origin:left">st</div>
<div class="c" style="top:189px;left:835px;transform:scaleX(1.144);transform-origin:left">country</div>
<div class="c" style="top:189px;left:889px;transform:scaleX(1.131);transform-origin:left">dob</div>
<div class="c" style="top:189px;left:964px;transform:scaleX(1.120);transform-origin:left">doby</div>
<div class="c" style="top:189px;left:1002px;transform:scaleX(1.071);transform-origin:left">gen</div>
<div class="c" style="top:189px;left:1032px;transform:scaleX(1.038);transform-origin:left">age</div>
<div class="c" style="top:189px;left:1061px;transform:scaleX(1.148);transform-origin:left">uid</div>
<div class="c" style="top:189px;left:1138px;transform:scaleX(1.092);transform-origin:left">value</div>
<div class="c" style="top:209px;left:28px;transform:scaleX(0.995);transform-origin:left">1-(650)-782-5622</div>
<div class="c" style="top:209px;left:138px;transform:scaleX(0.995);transform-origin:left">1-(650)-888-5622</div>
<div class="c" style="top:209px;left:248px;transform:scaleX(1.006);transform-origin:left">aece52e7-03ee-455a-b3c4-e57283966239</div>
<div class="c" style="top:209px;left:515px;transform:scaleX(1.069);transform-origin:left">Elizabeth</div>
<div class="c" style="top:209px;left:579px;transform:scaleX(1.039);transform-origin:left">Olsen</div>
<div class="c r" style="top:209px;left:653px;width:73px;transform:scaleX(0.968);transform-origin:right">94046</div>
<div class="c" style="top:209px;left:731px;transform:scaleX(1.084);transform-origin:left">Menlo Park</div>
<div class="c" style="top:209px;left:811px;transform:scaleX(0.903);transform-origin:left">CA</div>
<div class="c" style="top:209px;left:835px;transform:scaleX(0.895);transform-origin:left">US</div>
<div class="c r" style="top:209px;left:886px;width:73px;transform:scaleX(1.046);transform-origin:right">10/21/1968</div>
<div class="c r" style="top:209px;left:961px;width:36px;transform:scaleX(0.968);transform-origin:right">1968</div>
<div class="c" style="top:209px;left:1002px;transform:scaleX(0.849);transform-origin:left">F</div>
<div class="c r" style="top:209px;left:1029px;width:27px;transform:scaleX(0.968);transform-origin:right">48</div>
<div class="c r" style="top:209px;left:1058px;width:75px;transform:scaleX(0.968);transform-origin:right">1234567890</div>
<div class="c r" style="top:209px;left:1135px;width:47px;transform:scaleX(0.985);transform-origin:right">20.1</div>
<div class="c" style="top:229px;left:28px;transform:scaleX(0.990);transform-origin:left">1-(212) 523-3100</div>
<div class="c" style="top:229px;left:138px;transform:scaleX(0.990);transform-origin:left">1-(212) 123-3100</div>
<div class="c" style="top:229px;left:248px;transform:scaleX(0.940);transform-origin:left">BEBE52E7-03EE-455A-B3C4-E57283966239</div>
<div class="c" style="top:229px;left:515px;transform:scaleX(1.114);transform-origin:left">Andrew</div>
<div class="c" style="top:229px;left:579px;transform:scaleX(1.045);transform-origin:left">Jamison</div>
<div class="c r" style="top:229px;left:653px;width:73px;transform:scaleX(0.995);transform-origin:right">10118</div>
<div class="c" style="top:229px;left:731px;transform:scaleX(1.087);transform-origin:left">New York</div>
<div class="c" style="top:229px;left:811px;transform:scaleX(0.920);transform-origin:left">NY</div>
<div class="c" style="top:229px;left:835px;transform:scaleX(0.895);transform-origin:left">US</div>
<div class="c r" style="top:229px;left:886px;width:73px;transform:scaleX(1.046);transform-origin:right">10/17/1978</div>
<div class="c r" style="top:229px;left:961px;width:36px;transform:scaleX(0.968);transform-origin:right">1978</div>
<div class="c" style="top:229px;left:1002px;transform:scaleX(1.158);transform-origin:left">M</div>
<div class="c r" style="top:229px;left:1029px;width:27px;transform:scaleX(0.968);transform-origin:right">38</div>
<div class="c r" style="top:229px;left:1058px;width:75px;transform:scaleX(0.968);transform-origin:right">1443637309</div>
<div class="c r" style="top:229px;left:1135px;width:47px;transform:scaleX(0.979);transform-origin:right">1342.8</div>
<div class="c" style="top:249px;left:28px;transform:scaleX(0.990);transform-origin:left">1-(323) 617-6000</div>
<div class="c" style="top:249px;left:138px;transform:scaleX(0.990);transform-origin:left">1-(323) 543-6000</div>
<div class="c" style="top:249px;left:248px;transform:scaleX(1.011);transform-origin:left">adbe52e7-03ee-455a-b3c4-e57283966239</div>
<div class="c" style="top:249px;left:515px;transform:scaleX(1.125);transform-origin:left">Margaret</div>
<div class="c" style="top:249px;left:579px;transform:scaleX(1.051);transform-origin:left">Johnson</div>
<div class="c" style="top:249px;left:656px;transform:scaleX(0.976);transform-origin:left">90001-4656</div>
<div class="c" style="top:249px;left:731px;transform:scaleX(1.032);transform-origin:left">Los Angeles</div>
<div class="c" style="top:249px;left:811px;transform:scaleX(0.903);transform-origin:left">CA</div>
<div class="c" style="top:249px;left:835px;transform:scaleX(0.895);transform-origin:left">US</div>
<div class="c r" style="top:249px;left:886px;width:73px;transform:scaleX(1.061);transform-origin:right">11/21/1982</div>
<div class="c r" style="top:249px;left:961px;width:36px;transform:scaleX(0.968);transform-origin:right">1982</div>
<div class="c" style="top:249px;left:1002px;transform:scaleX(0.849);transform-origin:left">F</div>
<div class="c r" style="top:249px;left:1029px;width:27px;transform:scaleX(0.968);transform-origin:right">33</div>
<div class="c r" style="top:249px;left:1058px;width:75px;transform:scaleX(0.968);transform-origin:right">1234567892</div>
<div class="c r" style="top:249px;left:1135px;width:47px;transform:scaleX(0.968);transform-origin:right">600</div>
<div class="c" style="top:269px;left:28px;transform:scaleX(0.990);transform-origin:left">1-(312) 555-3600</div>
<div class="c" style="top:269px;left:138px;transform:scaleX(0.990);transform-origin:left">1-(312) 321-3600</div>
<div class="c" style="top:269px;left:248px;transform:scaleX(1.009);transform-origin:left">aebe52e7-03ee-455a-b3c4-e57283966239</div>
<div class="c" style="top:269px;left:515px;transform:scaleX(1.036);transform-origin:left">John</div>
<div class="c" style="top:269px;left:579px;transform:scaleX(1.047);transform-origin:left">Doe</div>
<div class="c r" style="top:269px;left:653px;width:73px;transform:scaleX(0.968);transform-origin:right">60603</div>
<div class="c" style="top:269px;left:731px;transform:scaleX(1.030);transform-origin:left">Chicago</div>
<div class="c" style="top:269px;left:811px;transform:scaleX(0.910);transform-origin:left">IL</div>
<div class="c" style="top:269px;left:835px;transform:scaleX(0.895);transform-origin:left">US</div>
<div class="c r" style="top:269px;left:886px;width:73px;transform:scaleX(1.068);transform-origin:right">9/1/1978</div>
<div class="c r" style="top:269px;left:961px;width:36px;transform:scaleX(0.968);transform-origin:right">1978</div>
<div class="c" style="top:269px;left:1002px;transform:scaleX(1.158);transform-origin:left">M</div>
<div class="c r" style="top:269px;left:1029px;width:27px;transform:scaleX(0.968);transform-origin:right">38</div>
<div class="c r" style="top:269px;left:1058px;width:75px;transform:scaleX(0.968);transform-origin:right">1234567890</div>
<div class="c r" style="top:269px;left:1135px;width:47px;transform:scaleX(0.968);transform-origin:right">505</div>
<div class="c" style="top:289px;left:28px;transform:scaleX(0.974);transform-origin:left">+44 871 663 1678</div>
<div class="c" style="top:289px;left:138px;transform:scaleX(0.974);transform-origin:left">+44 844 412 4653</div>
<div class="c" style="top:289px;left:248px;transform:scaleX(0.946);transform-origin:left">AEBD52E7-03EE-455A-B3C4-E57283966239</div>
<div class="c" style="top:289px;left:515px;transform:scaleX(1.124);transform-origin:left">Mark</div>
<div class="c" style="top:289px;left:579px;transform:scaleX(1.087);transform-origin:left">Smith</div>
<div class="c" style="top:289px;left:656px;transform:scaleX(0.976);transform-origin:left">SW1A 1AA</div>
<div class="c" style="top:289px;left:731px;transform:scaleX(1.085);transform-origin:left">London</div>
<div class="c" style="top:289px;left:835px;transform:scaleX(0.918);transform-origin:left">GB</div>
<div class="c r" style="top:289px;left:886px;width:73px;transform:scaleX(1.046);transform-origin:right">12/10/1978</div>
<div class="c r" style="top:289px;left:961px;width:36px;transform:scaleX(0.968);transform-origin:right">1978</div>
<div class="c" style="top:289px;left:1002px;transform:scaleX(1.158);transform-origin:left">M</div>
<div class="c r" style="top:289px;left:1029px;width:27px;transform:scaleX(0.968);transform-origin:right">38</div>
<div class="c r" style="top:289px;left:1058px;width:75px;transform:scaleX(0.968);transform-origin:right">1443637309</div>
<div class="c r" style="top:289px;left:1135px;width:47px;transform:scaleX(0.968);transform-origin:right">3123</div>
<div class="c" style="top:309px;left:28px;transform:scaleX(0.974);transform-origin:left">+44 844 482 5138</div>
<div class="c" style="top:309px;left:138px;transform:scaleX(0.974);transform-origin:left">+44 343 222 1234</div>
<div class="c" style="top:309px;left:248px;transform:scaleX(1.006);transform-origin:left">aece52e7-03ee-455a-b3c4-e57283966239</div>
<div class="c" style="top:309px;left:515px;transform:scaleX(1.002);transform-origin:left">James</div>
<div class="c" style="top:309px;left:579px;transform:scaleX(1.078);transform-origin:left">McLaughlin</div>
<div class="c" style="top:309px;left:656px;transform:scaleX(0.976);transform-origin:left">SW1A 1AA</div>
<div class="c" style="top:309px;left:731px;transform:scaleX(1.085);transform-origin:left">London</div>
<div class="c" style="top:309px;left:835px;transform:scaleX(0.918);transform-origin:left">GB</div>
<div class="c r" style="top:309px;left:886px;width:73px;transform:scaleX(1.046);transform-origin:right">10/21/1956</div>
<div class="c r" style="top:309px;left:961px;width:36px;transform:scaleX(0.968);transform-origin:right">1978</div>
<div class="c" style="top:309px;left:1002px;transform:scaleX(1.158);transform-origin:left">M</div>
<div class="c r" style="top:309px;left:1029px;width:27px;transform:scaleX(0.968);transform-origin:right">50</div>
<div class="c r" style="top:309px;left:1058px;width:75px;transform:scaleX(0.968);transform-origin:right">1234567892</div>
<div class="c r" style="top:309px;left:1135px;width:47px;transform:scaleX(0.981);transform-origin:right">456.9</div>
<div class="c" style="top:329px;left:28px;transform:scaleX(0.997);transform-origin:left">+55 11 3091-3116</div>
<div class="c" style="top:329px;left:138px;transform:scaleX(0.997);transform-origin:left">+55 11 3113-3651</div>
<div class="c" style="top:329px;left:248px;transform:scaleX(0.942);transform-origin:left">ACBE52E7-03EE-455A-B3C4-E57283966239</div>
<div class="c" style="top:329px;left:515px;transform:scaleX(1.052);transform-origin:left">Paulo</div>
<div class="c" style="top:329px;left:579px;transform:scaleX(1.067);transform-origin:left">Alessandro</div>
<div class="c" style="top:329px;left:656px;transform:scaleX(0.977);transform-origin:left">01310-200</div>
<div class="c" style="top:329px;left:731px;transform:scaleX(1.015);transform-origin:left">Sao Paulo</div>
<div class="c" style="top:329px;left:835px;transform:scaleX(0.883);transform-origin:left">BR</div>
<div class="c r" style="top:329px;left:886px;width:73px;transform:scaleX(1.046);transform-origin:right">12/21/1978</div>
<div class="c r" style="top:329px;left:961px;width:36px;transform:scaleX(0.968);transform-origin:right">1976</div>
<div class="c" style="top:329px;left:1002px;transform:scaleX(1.158);transform-origin:left">M</div>
<div class="c r" style="top:329px;left:1029px;width:27px;transform:scaleX(0.968);transform-origin:right">40</div>
<div class="c r" style="top:329px;left:1058px;width:75px;transform:scaleX(0.968);transform-origin:right">1234567890</div>
<div class="c r" style="top:329px;left:1135px;width:47px;transform:scaleX(0.968);transform-origin:right">60</div>
<div class="c" style="top:349px;left:28px;transform:scaleX(0.974);transform-origin:left">+33 1 53 09 82 82</div>
<div class="c" style="top:349px;left:138px;transform:scaleX(0.974);transform-origin:left">+33 1 40 20 53 17</div>
<div class="c" style="top:349px;left:248px;transform:scaleX(0.940);transform-origin:left">AFCE52E7-03EE-455A-B3C4-E57283966239</div>
<div class="c" style="top:349px;left:515px;transform:scaleX(1.130);transform-origin:left">Marie</div>
<div class="c" style="top:349px;left:579px;transform:scaleX(1.096);transform-origin:left">Laurent</div>
<div class="c r" style="top:349px;left:653px;width:73px;transform:scaleX(0.968);transform-origin:right">75007</div>
<div class="c" style="top:349px;left:731px;transform:scaleX(1.016);transform-origin:left">Paris</div>
<div class="c" style="top:349px;left:835px;transform:scaleX(0.849);transform-origin:left">FR</div>
<div class="c r" style="top:349px;left:886px;width:73px;transform:scaleX(1.046);transform-origin:right">10/10/1965</div>
<div class="c r" style="top:349px;left:961px;width:36px;transform:scaleX(0.968);transform-origin:right">1978</div>
<div class="c" style="top:349px;left:1002px;transform:scaleX(0.849);transform-origin:left">F</div>
<div class="c r" style="top:349px;left:1029px;width:27px;transform:scaleX(0.968);transform-origin:right">51</div>
<div class="c r" style="top:349px;left:1058px;width:75px;transform:scaleX(0.968);transform-origin:right">1443637309</div>
<div class="c r" style="top:349px;left:1135px;width:47px;transform:scaleX(0.968);transform-origin:right">77</div>
<div class="c" style="top:369px;left:28px;transform:scaleX(0.974);transform-origin:left">+33 1 49 52 42 63</div>
<div class="c" style="top:369px;left:138px;transform:scaleX(0.974);transform-origin:left">+33 1 42 96 70 00</div>
<div class="c" style="top:369px;left:248px;transform:scaleX(1.009);transform-origin:left">aebe52e7-03ee-455a-b3c4-e57283966239</div>
<div class="c" style="top:369px;left:515px;transform:scaleX(1.053);transform-origin:left">Thomas</div>
<div class="c" style="top:369px;left:579px;transform:scaleX(1.068);transform-origin:left">Dubois</div>
<div class="c r" style="top:369px;left:653px;width:73px;transform:scaleX(0.968);transform-origin:right">75007</div>
<div class="c" style="top:369px;left:731px;transform:scaleX(1.016);transform-origin:left">Paris</div>
<div class="c" style="top:369px;left:835px;transform:scaleX(0.849);transform-origin:left">FR</div>
<div class="c r" style="top:369px;left:886px;width:73px;transform:scaleX(1.061);transform-origin:right">11/19/1972</div>
<div class="c r" style="top:369px;left:961px;width:36px;transform:scaleX(0.968);transform-origin:right">1978</div>
<div class="c" style="top:369px;left:1002px;transform:scaleX(1.158);transform-origin:left">M</div>
<div class="c r" style="top:369px;left:1029px;width:27px;transform:scaleX(0.968);transform-origin:right">44</div>
<div class="c r" style="top:369px;left:1058px;width:75px;transform:scaleX(0.968);transform-origin:right">1234567892</div>
<div class="c r" style="top:369px;left:1135px;width:47px;transform:scaleX(0.968);transform-origin:right">590</div>
<div class="a" style="left:26px;top:188px;width:110px;height:1px;background:#000"></div>
<div class="a" style="left:26px;top:188px;width:1px;height:21px;background:#000"></div>
<div class="a" style="left:134px;top:188px;width:3px;height:16px;background:#000"></div>
<div class="a" style="left:26px;top:206px;width:106px;height:3px;background:#000"></div>
<div class="a" style="left:132px;top:204px;width:7px;height:7px;background:#fff"></div>
<div class="a" style="left:133px;top:205px;width:5px;height:5px;background:#000"></div>
<div class="a " style="left:1350px;top:168px;width:16px;height:522px;background:linear-gradient(90deg,#A9C1E2,#7E9FCB 30%,#7A9CC8)"></div>
<div class="a " style="left:1352px;top:169px;width:13px;height:7px;background:#fff;border:1px solid #8FA9CC"></div>
<div class="a " style="left:1355px;top:172px;width:7px;height:1px;background:#4D6A94"></div>
<svg class="a" style="left:1354px;top:181px" width="10" height="6"><path d="M0 5.5H9.5L4.75 0Z" fill="#4A5A78"/></svg>
<div class="a " style="left:1351px;top:193px;width:15px;height:441px;background:linear-gradient(90deg,#F4F6FA,#E1E7F0 45%,#C4D0E2 55%,#A6B8D2);border:1px solid #8195B5;border-radius:2px"></div>
<svg class="a" style="left:1355px;top:409px" width="8" height="7"><path d="M0 0.5H8M0 2.5H8M0 4.5H8M0 6.5H8" stroke="#6A6A6A" stroke-width="0.9"/></svg>
<svg class="a" style="left:1354px;top:680px" width="10" height="6"><path d="M0 0.5H9.5L4.75 6Z" fill="#4A5A78"/></svg>
<div class="a " style="left:0px;top:690px;width:813px;height:16px;background:linear-gradient(#A9C2E5,#9AB5DC 60%,#93B0DA)"></div>
<div class="a " style="left:0px;top:705px;width:1366px;height:1px;background:#6287BC"></div>
<div class="a " style="left:0px;top:706px;width:1366px;height:1px;background:#F2F6FC"></div>
<div class="a " style="left:0px;top:690px;width:63px;height:15px;background:linear-gradient(#E3ECF8,#C7DAF1);border-top:1px solid #8DAED9;border-right:1px solid #8DAED9"></div>
<svg class="a" style="left:5px;top:694px" width="54" height="8"><rect x="0.5" y="0" width="1.2" height="7" fill="#1E3F84"/><path d="M7 0V7L2.5 3.5Z" fill="#1E3F84"/><path d="M21.5 0V7L16.5 3.5Z" fill="#1E3F84"/><path d="M31 0V7L35.5 3.5Z" fill="#1E3F84"/><path d="M45 0V7L49.5 3.5Z" fill="#1E3F84"/><rect x="50" y="0" width="1.2" height="7" fill="#1E3F84"/></svg>
<svg class="a" style="left:62px;top:688px" width="275" height="19"><defs><linearGradient id="st" x1="0" y1="0" x2="0" y2="1"><stop offset="0" stop-color="#FFFFFF"/><stop offset="0.6" stop-color="#FFFFFF"/><stop offset="1" stop-color="#DCE6F4"/></linearGradient><linearGradient id="it" x1="0" y1="0" x2="0" y2="1"><stop offset="0" stop-color="#E4EDF8"/><stop offset="1" stop-color="#C9DAF0"/></linearGradient></defs><path d="M0.5 0H237L227 17.5H5Q1 17.5 0.5 14Z" fill="url(#st)"/><path d="M1 13Q1.5 17.5 6 17.5H226.5L236.5 0.5" stroke="#8FA9CF" fill="none"/><path d="M226 17.5L236 2.5H271L257 17.5Z" fill="url(#it)" stroke="#8FA9CF"/></svg>
<div class="t" style="top:692.07px;font-size:13.5px;color:#15428B;font-weight:bold;left:72px;transform:scaleX(0.945);transform-origin:left">example_value_based_audience_fi</div>
<svg class="a" style="left:301px;top:691px" width="17" height="14"><defs><linearGradient id="ish" x1="0" y1="0" x2="0" y2="1"><stop offset="0" stop-color="#FFFFFF"/><stop offset="1" stop-color="#B9C6D8"/></linearGradient></defs><path d="M4.5 3.5H15.5V10.5Q15.5 11.5 14.5 11.5H11L10 12.5H7L6 11.5Q4.5 11.5 4.5 10.5Z" fill="url(#ish)" stroke="#5F6F8A"/><path d="M4 0.5L4.8 2.6L7 2L5.4 3.6L7 5.3L4.8 4.7L4 6.8L3.2 4.7L1 5.3L2.6 3.6L1 2L3.2 2.6Z" fill="#F0A020" stroke="#E08A10" stroke-width="0.5"/><circle cx="4" cy="3.6" r="0.9" fill="#fff"/></svg>
<div class="a " style="left:813px;top:690px;width:537px;height:16px;background:#7A9CC6;border-top:1px solid #6A8CB9"></div>
<div class="a " style="left:811px;top:692px;width:7px;height:13px;background:#fff;border:1px solid #9AB2D3"></div>
<div class="a " style="left:814px;top:695px;width:1px;height:7px;background:#4D6A94"></div>
<svg class="a" style="left:823px;top:694px" width="6" height="10"><path d="M5.5 0V9.5L0 4.75Z" fill="#4A5A78"/></svg>
<div class="a " style="left:929px;top:691px;width:396px;height:15px;background:linear-gradient(#F4F6FA,#E1E7F0 45%,#C9D4E4 55%,#B3C3D9);border:1px solid #8195B5;border-radius:2px"></div>
<svg class="a" style="left:1123px;top:695px" width="8" height="8"><path d="M0.5 0V8M2.5 0V8M4.5 0V8M6.5 0V8" stroke="#6A6A6A" stroke-width="0.9"/></svg>
<svg class="a" style="left:1331px;top:694px" width="6" height="10"><path d="M0 0V9.5L5.5 4.75Z" fill="#4A5A78"/></svg>
<div class="a " style="left:1342px;top:692px;width:7px;height:13px;background:#fff;border:1px solid #9AB2D3"></div>
<div class="a " style="left:1345px;top:695px;width:1px;height:7px;background:#4D6A94"></div>
<div class="a " style="left:1350px;top:690px;width:16px;height:17px;background:#7A9CC6"></div>
<div class="a " style="left:0px;top:707px;width:1366px;height:21px;background:linear-gradient(#D9E7F9 0,#CADDF6 30%,#B5CDF0 40%,#C3D8F3 75%,#D3E3F7 100%)"></div>
<div class="a " style="left:46px;top:708px;width:1px;height:19px;background:#9AB6DC"></div>
<div class="a " style="left:47px;top:708px;width:1px;height:19px;background:#EEF4FC"></div>
<div class="t" style="top:712.23px;font-size:11.3px;color:#15428B;left:7px;">Ready</div>
<div class="a " style="left:1121px;top:707px;width:245px;height:21px;background:linear-gradient(#D7E6F9 0,#C2D6F2 30%,#AFC8EC 55%,#A1BCE5 100%)"></div>
<div class="a " style="left:1119px;top:708px;width:1px;height:19px;background:#9AB6DC"></div>
<div class="a " style="left:1120px;top:708px;width:1px;height:19px;background:#F2F7FD"></div>
<div class="a " style="left:1126px;top:709px;width:57px;height:17px;background:linear-gradient(#D9E7F8,#C2D7F2);border:1px solid #A7C0E2;border-radius:2px"></div>
<div class="a " style="left:1127px;top:710px;width:18px;height:15px;background:linear-gradient(#FDE3A6,#FBC86E)"></div>
<svg class="a" style="left:1129px;top:711px" width="14" height="12"><rect x="0.5" y="0.5" width="13" height="11" fill="#fff" stroke="#555"/><path d="M0.5 4.5H13.5M0.5 7.5H13.5M4.5 0.5V11.5M9.5 0.5V11.5" stroke="#555"/></svg>
<svg class="a" style="left:1148px;top:710px" width="14" height="13"><rect x="0.5" y="0.5" width="13" height="12" fill="#A0A0A0" stroke="#555"/><rect x="3.5" y="2.5" width="7" height="8" fill="#fff" stroke="#777"/></svg>
<svg class="a" style="left:1166px;top:710px" width="14" height="13"><rect x="0.5" y="0.5" width="13" height="12" fill="#A0A0A0" stroke="#555"/><rect x="2.5" y="0.5" width="4" height="7" fill="#fff" stroke="#555"/><rect x="7.5" y="0.5" width="4" height="7" fill="#fff" stroke="#555"/></svg>
<div class="t" style="top:712.03px;font-size:11.3px;color:#142F66;left:1192px;transform:scaleX(0.93);transform-origin:left">100%</div>
<svg class="a" style="left:1226px;top:709px" width="17" height="17"><circle cx="8.5" cy="8" r="7" fill="#EEF3FA" stroke="#5D7396"/><rect x="4.5" y="7" width="8" height="2.2" fill="#3B4A66"/></svg>
<div class="a " style="left:1243px;top:716px;width:103px;height:1px;background:#8FA6C8"></div>
<div class="a " style="left:1243px;top:717px;width:103px;height:1px;background:#fff"></div>
<svg class="a" style="left:1287px;top:709px" width="13" height="15"><path d="M0.5 0.5H12.5V9L6.5 14L0.5 9Z" fill="#F4F7FB" stroke="#5D7396"/><path d="M5.5 3V8M7.5 3V8" stroke="#8A9AB4"/></svg>
<svg class="a" style="left:1345px;top:709px" width="17" height="17"><circle cx="8.5" cy="8" r="7" fill="#EEF3FA" stroke="#5D7396"/><rect x="4.5" y="7" width="8" height="2.2" fill="#3B4A66"/><rect x="7.4" y="3.9" width="2.2" height="8.2" fill="#3B4A66"/></svg>
<div class="a " style="left:0px;top:728px;width:1366px;height:40px;background:#243137"></div>
<div class="a " style="left:48px;top:728px;width:344px;height:40px;background:#F0F0F0"></div>
<svg class="a" style="left:15px;top:740px" width="18" height="17"><path d="M0 2.3L7 1.3V7.8H0Z M8 1.15L17 0V7.8H8Z M0 8.8H7V15.3L0 14.3Z M8 8.8H17V16.6L8 15.4Z" fill="#fff"/></svg>
<svg class="a" style="left:59px;top:738px" width="18" height="20"><circle cx="10.5" cy="7.5" r="6" fill="none" stroke="#111" stroke-width="1.3"/><path d="M6.2 11.8L1 17.5" stroke="#111" stroke-width="1.5"/></svg>
<div class="t" style="top:742.44px;font-size:14.6px;color:#000;left:88px;">Type here to search</div>
<svg class="a" style="left:406px;top:738px" width="20" height="20"><circle cx="10" cy="9.5" r="7" fill="none" stroke="#fff" stroke-width="2"/></svg>
<svg class="a" style="left:455px;top:739px" width="18" height="17"><path d="M0.5 0.5V2.5M13.5 0.5V2.5M0.5 14.5V16.5M13.5 14.5V16.5" stroke="#fff"/><rect x="1.5" y="3.5" width="11" height="10" fill="none" stroke="#fff" stroke-width="1.3"/><path d="M16.5 0.5V16.5" stroke="#fff" stroke-dasharray="2 1"/><rect x="15" y="5" width="3" height="3" fill="#fff"/></svg>
<svg class="a" style="left:500px;top:737px" width="25" height="23"><ellipse cx="11.5" cy="12" rx="10" ry="5.5" transform="rotate(-28 11.5 12)" fill="#9FA4A8"/><ellipse cx="12.5" cy="9.5" rx="10" ry="5.5" transform="rotate(-28 12.5 9.5)" fill="#F4F4F4" stroke="#D9342B" stroke-width="1.1"/><path d="M12 4L14 13M18 5L11 12" stroke="#8A8A8A" stroke-width="1"/><ellipse cx="14.5" cy="18.5" rx="2" ry="3.2" transform="rotate(20 14.5 18.5)" fill="none" stroke="#1E8CE0" stroke-width="1.4"/><ellipse cx="20" cy="15.5" rx="3" ry="2" transform="rotate(30 20 15.5)" fill="none" stroke="#1E8CE0" stroke-width="1.4"/></svg>
<svg class="a" style="left:544px;top:739px" width="22" height="19"><path d="M0 0.5H9L10 2H21.5V17H0Z" fill="#E4A81E"/><rect x="0" y="2.5" width="21.5" height="14.5" fill="#FCD46A"/><path d="M4 17.5V10H17V17.5H14V13H7V17.5Z" fill="#3A96DD"/></svg>
<svg class="a" style="left:589px;top:739px" width="18" height="18"><rect x="0" y="0" width="18" height="18" fill="#FCE100"/><path d="M9 9H18L9 18Z" fill="#1E2A33"/></svg>
<svg class="a" style="left:629px;top:737px" width="24" height="23"><circle cx="12" cy="11.5" r="11" fill="#F4F4F4"/><g stroke-width="3" stroke-linecap="round"><path d="M9.5 5V10" stroke="#36C5F0"/><path d="M14 8.5H19" stroke="#2EB67D"/><path d="M14.5 13V18" stroke="#ECB22E"/><path d="M5 14.5H10" stroke="#E01E5A"/><path d="M5 9.5H6" stroke="#36C5F0"/><path d="M14 5V6" stroke="#2EB67D"/><path d="M18 14H19" stroke="#ECB22E"/><path d="M9.5 18V17.5" stroke="#E01E5A"/></g></svg>
<div class="a " style="left:624px;top:766px;width:34px;height:2px;background:#76B9ED"></div>
<svg class="a" style="left:673px;top:738px" width="22" height="21"><circle cx="11" cy="10.5" r="10.3" fill="#FBE000"/><path d="M4 13Q5 9 7 12Q9 14 11 8Q13 4 15 9Q16 12 18 10" stroke="#2A2A2A" stroke-width="1.6" fill="none"/><path d="M4.5 14Q11 19 17.5 14" stroke="#2A2A2A" stroke-width="1.4" fill="none"/></svg>
<div class="a " style="left:667px;top:766px;width:34px;height:2px;background:#76B9ED"></div>
<svg class="a" style="left:715.2px;top:736.5px" width="23" height="23"><path d="M11.5 11.5L1.97 6A11 11 0 0 1 21.03 6Z" fill="#DB4437"/><path d="M11.5 11.5L21.03 6A11 11 0 0 1 11.5 22.5Z" fill="#FFCD40"/><path d="M11.5 11.5L11.5 22.5A11 11 0 0 1 1.97 6Z" fill="#0F9D58"/><circle cx="11.5" cy="11.5" r="5.2" fill="#fff"/><circle cx="11.5" cy="11.5" r="4.1" fill="#4285F4"/></svg>
<div class="a " style="left:749px;top:728px;width:42px;height:40px;background:#A2622E"></div>
<div class="a " style="left:749px;top:765px;width:42px;height:3px;background:#F7630C"></div>
<svg class="a" style="left:758px;top:736px" width="24" height="24"><circle cx="12" cy="12" r="10.5" fill="#0DA4E8"/><circle cx="6" cy="6" r="5" fill="#0DA4E8"/><circle cx="18" cy="18" r="5" fill="#0DA4E8"/><text x="6" y="18.5" font-size="17" font-weight="bold" font-family="Liberation Sans" fill="#fff">S</text></svg>
<svg class="a" style="left:800px;top:736px" width="26" height="24"><path d="M2 14Q0 6 10 4Q20 3 21 10Q21 14 17 14Q13 14 15 18Q16 21 10 20Q4 20 2 14Z" fill="#C9DDF0" stroke="#8AA7C4"/><circle cx="6" cy="12" r="1.8" fill="#E23B3B"/><circle cx="8" cy="8" r="1.8" fill="#3BB44A"/><circle cx="13" cy="7" r="1.8" fill="#F6B42D"/><circle cx="10" cy="15" r="1.6" fill="#264E8C"/><path d="M23 1L13 18" stroke="#E79A35" stroke-width="2"/><path d="M22 0L24.5 2L22 5Z" fill="#F3C35A"/></svg>
<svg class="a" style="left:843px;top:737px" width="34" height="27"><path d="M16 2A11 11 0 1 0 16 22H25V11A11 11 0 0 0 16 2Z" fill="#6F767C"/><circle cx="12.5" cy="11.5" r="9" fill="#F3F3F3"/><path d="M12.5 11.5L7 6M12.5 11.5L18 6" stroke="#222" stroke-width="1.7"/><path d="M12.5 11.5V18" stroke="#E81123" stroke-width="1.7"/><circle cx="25" cy="18.5" r="8" fill="#2B2B2B" stroke="#777" stroke-width="1"/><path d="M22 21.5V17.5Q22 14.5 25 14.5Q28 14.5 28 17.5V21.5ZM21 21.5H29M24 23H26" stroke="#fff" stroke-width="1.1" fill="none"/></svg>
<svg class="a" style="left:887px;top:736px" width="36" height="28"><path d="M0 8L12 0L24 8V22H0Z" fill="#1071C4"/><path d="M0 8L12 16L24 8V22H0Z" fill="#28A8EA"/><path d="M3 8L12 14L21 8V6H3Z" fill="#fff"/><circle cx="23" cy="19" r="8.5" fill="#2B2B2B" stroke="#777" stroke-width="1"/><text x="16.2" y="23.3" font-size="11.5" font-family="Liberation Sans" fill="#fff">59</text></svg>
<svg class="a" style="left:930px;top:736px" width="25" height="25"><g fill="none" stroke-width="6.5"><path d="M11 4.6A8 8 0 0 0 5.5 16.5" stroke="#2186EE"/><path d="M14 4.6A8 8 0 0 1 19.5 16.5" stroke="#5DB6F8"/><path d="M7 18.3A8 8 0 0 0 18 18.3" stroke="#2451DA"/></g></svg>
<svg class="a" style="left:973px;top:736px" width="24" height="24"><rect x="1" y="3" width="22" height="20" fill="#1B8DD8"/><rect x="1" y="3" width="22" height="4" fill="#0E6DB8"/><rect x="5" y="1" width="2" height="5" fill="#8ED0F8"/><rect x="16" y="1" width="2" height="5" fill="#8ED0F8"/><g fill="#fff"><rect x="8" y="10" width="2" height="2"/><rect x="12" y="10" width="2" height="2"/><rect x="16" y="10" width="2" height="2"/><rect x="4" y="14" width="2" height="2"/><rect x="8" y="14" width="2" height="2"/><rect x="12" y="14" width="2" height="2"/><rect x="16" y="14" width="2" height="2"/><rect x="4" y="18" width="2" height="2"/><rect x="8" y="18" width="2" height="2"/><rect x="12" y="18" width="2" height="2"/></g></svg>
<svg class="a" style="left:1015.5px;top:736.5px" width="23" height="23"><path d="M11.5 11.5L1.97 6A11 11 0 0 1 21.03 6Z" fill="#DB4437"/><path d="M11.5 11.5L21.03 6A11 11 0 0 1 11.5 22.5Z" fill="#FFCD40"/><path d="M11.5 11.5L11.5 22.5A11 11 0 0 1 1.97 6Z" fill="#0F9D58"/><circle cx="11.5" cy="11.5" r="5.2" fill="#fff"/><circle cx="11.5" cy="11.5" r="4.1" fill="#4285F4"/></svg>
<div class="a " style="left:1011px;top:766px;width:32px;height:2px;background:#76B9ED"></div>
<div class="a " style="left:1049px;top:728px;width:41px;height:40px;background:#434E55"></div>
<div class="a " style="left:1049px;top:766px;width:41px;height:2px;background:#76B9ED"></div>
<svg class="a" style="left:1056px;top:737px" width="25" height="23"><path d="M2 3L15 1L24 4V21L12 23L1 20Z" fill="#E9F3E2" stroke="#86B973"/><path d="M12 7H23M12 11H23M12 15H23M17 5V20" stroke="#6BAF4E" stroke-width="1.2"/><path d="M3 6L10 16M10 6L3 16" stroke="#1F7A36" stroke-width="2.6"/></svg>
<svg class="a" style="left:1098px;top:743px" width="14" height="10"><path d="M1 8.5L7 2L13 8.5" stroke="#fff" stroke-width="1.4" fill="none"/></svg>
<svg class="a" style="left:1122px;top:744px" width="16" height="10"><rect x="0.8" y="0.8" width="12.5" height="8" fill="none" stroke="#fff" stroke-width="1.3"/><rect x="2.5" y="2.5" width="5" height="4.6" fill="#fff"/><rect x="14" y="3" width="1.5" height="3.6" fill="#fff"/></svg>
<svg class="a" style="left:1144px;top:742px" width="19" height="14"><path d="M3 11Q0 11 0.5 8Q1 5.5 4 6Q5 2 9 2Q13 2 13.5 6Q16 6 16 9Q16 11 14 11Z" fill="#C4C8CC"/><circle cx="13" cy="10" r="4.2" fill="#E81123"/><path d="M11 8L15 12M15 8L11 12" stroke="#fff" stroke-width="1.2"/></svg>
<svg class="a" style="left:1171px;top:741px" width="15" height="15"><path d="M1 13A12 12 0 0 1 13 1M3.5 13A9.5 9.5 0 0 1 13 3.5M6 13A7 7 0 0 1 13 6M8.5 13A4.5 4.5 0 0 1 13 8.5" stroke="#fff" stroke-width="1" fill="none"/><circle cx="12.5" cy="12.5" r="1.3" fill="#fff"/></svg>
<svg class="a" style="left:1192px;top:740px" width="18" height="16"><path d="M1 5H4L8 1.5V14.5L4 11H1Z" fill="none" stroke="#fff" stroke-width="1.1"/><path d="M10.5 5.5Q12 8 10.5 10.5M12.5 3.5Q15 8 12.5 12.5M14.5 1.5Q18 8 14.5 14.5" stroke="#fff" stroke-width="1" fill="none"/></svg>
<div class="t" style="top:743.32px;font-size:11.2px;color:#fff;left:1219px;">ENG</div>
<div class="t" style="top:734.47px;font-size:11.5px;color:#fff;left:1131px;width:300px;text-align:center;">3:29 PM</div>
<div class="t" style="top:751.87px;font-size:11.5px;color:#fff;left:1131px;width:300px;text-align:center;">5/9/2020</div>
<svg class="a" style="left:1324px;top:739px" width="30" height="28"><path d="M1 1H16V12H6L3 15V12H1Z" fill="#fff"/><path d="M3.5 4H13.5M3.5 6.5H13.5M3.5 9H11" stroke="#232F37" stroke-width="1"/><circle cx="16.5" cy="16" r="9.5" fill="#2B2B2B" stroke="#777" stroke-width="1"/><text x="9.3" y="20.5" font-size="12" font-family="Liberation Sans" fill="#fff">27</text></svg>

</body></html>
